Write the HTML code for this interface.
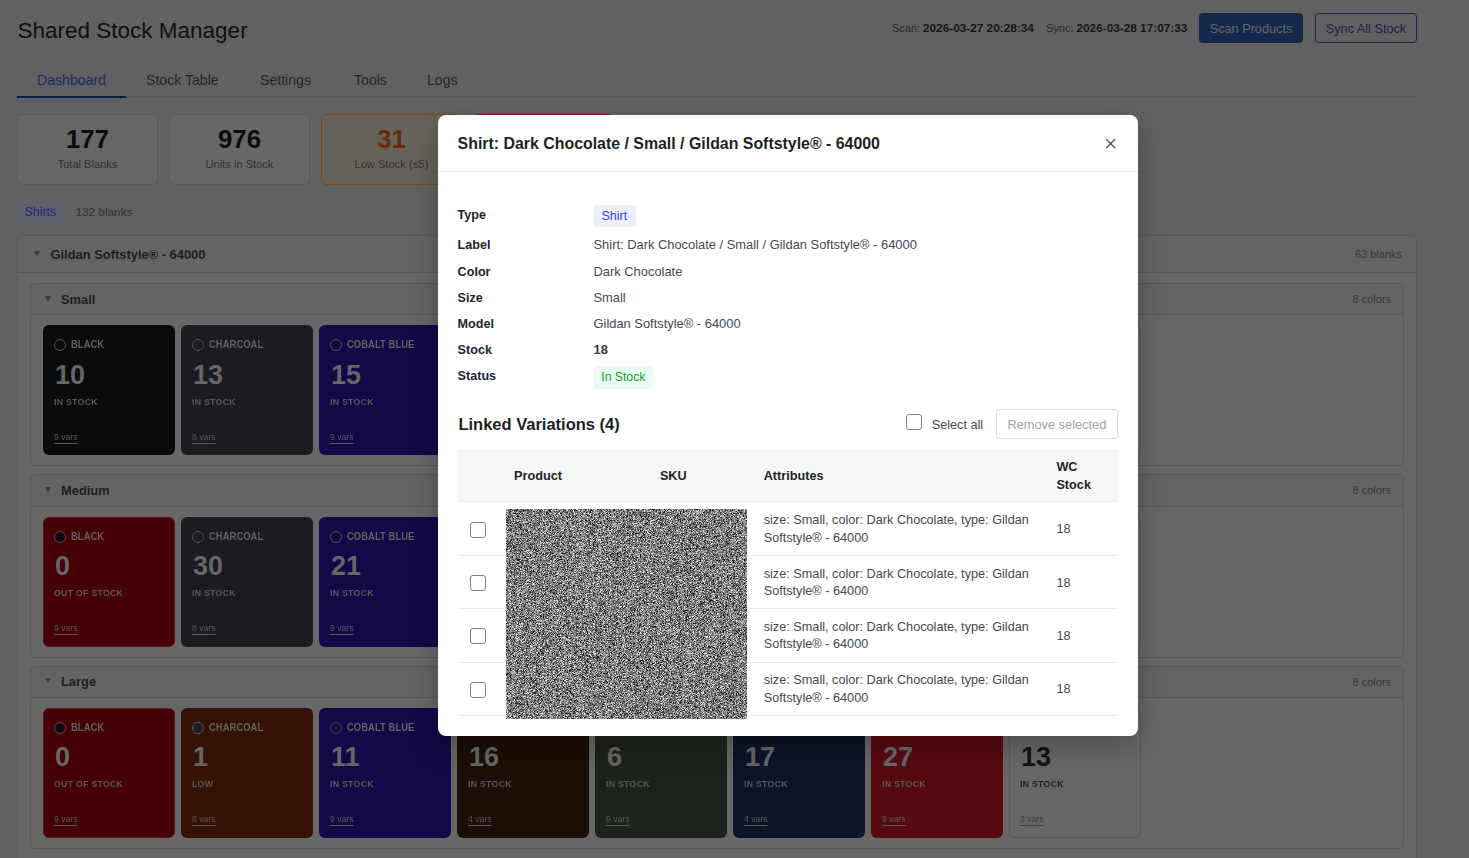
<!DOCTYPE html>
<html><head><meta charset="utf-8"><style>
html,body{margin:0;padding:0;width:1469px;height:858px;overflow:hidden;background:rgb(97,97,98);}
body{position:relative;font-family:"Liberation Sans", sans-serif;}
body>div,body>svg{position:absolute;}
.t{white-space:nowrap;}
</style></head><body>
<div class="t" style="left:17.5px;top:20.00px;font-size:22.5px;line-height:22.5px;color:rgb(14,15,18);font-weight:400;;">Shared Stock Manager</div>
<div class="t" style="left:892px;top:23.00px;font-size:11px;line-height:11px;color:rgb(40,40,44);font-weight:400;;">Scan:</div>
<div class="t" style="left:923px;top:23.00px;font-size:11.8px;line-height:11.8px;color:rgb(22,22,26);font-weight:700;;">2026-03-27 20:28:34</div>
<div class="t" style="left:1046px;top:23.00px;font-size:11px;line-height:11px;color:rgb(40,40,44);font-weight:400;;">Sync:</div>
<div class="t" style="left:1076.5px;top:23.00px;font-size:11.8px;line-height:11.8px;color:rgb(22,22,26);font-weight:700;;">2026-03-28 17:07:33</div>
<div style="left:1199px;top:13px;width:104px;height:30px;background:rgb(20,40,74);border-radius:4px"></div>
<div class="t" style="left:1199px;width:104px;text-align:center;top:23.00px;font-size:12.7px;line-height:12.7px;color:rgb(102,104,110);font-weight:400;;">Scan Products</div>
<div style="left:1315px;top:13px;width:102px;height:30px;border:1px solid rgb(20,40,74);border-radius:4px;box-sizing:border-box"></div>
<div class="t" style="left:1315px;width:102px;text-align:center;top:23.00px;font-size:12.7px;line-height:12.7px;color:rgb(20,36,66);font-weight:400;;">Sync All Stock</div>
<div style="left:17px;top:96px;width:1400px;height:2px;background:rgb(87,87,88)"></div>
<div class="t" style="left:37px;top:73.00px;font-size:14.1px;line-height:14.1px;color:rgb(22,44,88);font-weight:400;;">Dashboard</div>
<div class="t" style="left:146px;top:73.00px;font-size:14.1px;line-height:14.1px;color:rgb(36,36,40);font-weight:400;;">Stock Table</div>
<div class="t" style="left:260px;top:73.00px;font-size:14.1px;line-height:14.1px;color:rgb(36,36,40);font-weight:400;;">Settings</div>
<div class="t" style="left:354px;top:73.00px;font-size:14.1px;line-height:14.1px;color:rgb(36,36,40);font-weight:400;;">Tools</div>
<div class="t" style="left:427px;top:73.00px;font-size:14.1px;line-height:14.1px;color:rgb(36,36,40);font-weight:400;;">Logs</div>
<div style="left:17px;top:96px;width:109px;height:2px;background:rgb(10,30,72)"></div>
<div style="left:17px;top:114px;width:141px;height:71px;background:rgb(103,103,103);border:1px solid rgb(88,88,89);border-radius:6px;box-sizing:border-box"></div>
<div class="t" style="left:17px;width:141px;text-align:center;top:127.00px;font-size:25.8px;line-height:25.8px;color:rgb(12,12,16);font-weight:700;;">177</div>
<div class="t" style="left:17px;width:141px;text-align:center;top:159.00px;font-size:11.1px;line-height:11.1px;color:rgb(48,48,52);font-weight:400;;">Total Blanks</div>
<div style="left:169px;top:114px;width:141px;height:71px;background:rgb(103,103,103);border:1px solid rgb(88,88,89);border-radius:6px;box-sizing:border-box"></div>
<div class="t" style="left:169px;width:141px;text-align:center;top:127.00px;font-size:25.8px;line-height:25.8px;color:rgb(12,12,16);font-weight:700;;">976</div>
<div class="t" style="left:169px;width:141px;text-align:center;top:159.00px;font-size:11.1px;line-height:11.1px;color:rgb(48,48,52);font-weight:400;;">Units in Stock</div>
<div style="left:321px;top:114px;width:141px;height:71px;background:rgb(103,99,91);border:1px solid rgb(128,72,14);border-radius:6px;box-sizing:border-box"></div>
<div class="t" style="left:321px;width:141px;text-align:center;top:127.00px;font-size:25.8px;line-height:25.8px;color:rgb(104,42,10);font-weight:700;;">31</div>
<div class="t" style="left:321px;width:141px;text-align:center;top:159.00px;font-size:11.1px;line-height:11.1px;color:rgb(48,48,52);font-weight:400;;">Low Stock (≤5)</div>
<div style="left:473px;top:114px;width:141px;height:71px;background:rgb(104,94,94);border:1px solid rgb(120,20,24);border-radius:6px;box-sizing:border-box"></div>
<div style="left:17px;top:201px;width:48px;height:21.5px;background:rgb(94,96,110);border-radius:3px"></div>
<div class="t" style="left:24.5px;top:206.00px;font-size:12.4px;line-height:12.4px;color:rgb(40,36,120);font-weight:400;;">Shirts</div>
<div class="t" style="left:75.4px;top:207.00px;font-size:11.8px;line-height:11.8px;color:rgb(48,48,52);font-weight:400;;">132 blanks</div>
<div style="left:17px;top:235px;width:1400px;height:700px;background:rgb(103,103,103);border:1px solid rgb(88,88,89);border-radius:6px;box-sizing:border-box"></div>
<div style="left:18px;top:236px;width:1398px;height:36px;background:rgb(100,100,101);border-radius:5px 5px 0 0"></div>
<div style="left:18px;top:272px;width:1398px;height:1px;background:rgb(88,88,89)"></div>
<div style="left:34px;top:251.1px;width:0;height:0;border-left:3px solid transparent;border-right:3px solid transparent;border-top:6px solid rgb(58,61,70)"></div>
<div class="t" style="left:50.5px;top:249.00px;font-size:12.9px;line-height:12.9px;color:rgb(28,30,38);font-weight:700;;">Gildan Softstyle® - 64000</div>
<div class="t" style="right:67px;text-align:right;top:249.00px;font-size:11px;line-height:11px;color:rgb(52,52,58);font-weight:400;;">63 blanks</div>
<div style="left:30px;top:283px;width:1374px;height:183px;background:rgb(103,103,103);border:1px solid rgb(88,88,89);border-radius:5px;box-sizing:border-box"></div>
<div style="left:31px;top:284px;width:1372px;height:30px;background:rgb(100,100,101);border-radius:4px 4px 0 0"></div>
<div style="left:31px;top:314px;width:1372px;height:1px;background:rgb(88,88,89)"></div>
<div style="left:45px;top:295.5px;width:0;height:0;border-left:3px solid transparent;border-right:3px solid transparent;border-top:6px solid rgb(58,61,70)"></div>
<div class="t" style="left:61px;top:294.00px;font-size:12.9px;line-height:12.9px;color:rgb(28,30,38);font-weight:700;;">Small</div>
<div class="t" style="right:78px;text-align:right;top:294.00px;font-size:11px;line-height:11px;color:rgb(52,52,58);font-weight:400;;">8 colors</div>
<div style="left:43px;top:325px;width:132px;height:130px;background:rgb(11,11,11);border-radius:6px;box-sizing:border-box"></div>
<div style="left:54px;top:339px;width:12px;height:12px;border:1px solid rgb(80,80,80);border-radius:50%;box-sizing:border-box"></div>
<div class="t" style="left:71.4px;top:339.00px;font-size:10.9px;line-height:10.9px;color:rgb(98,98,98);font-weight:700;letter-spacing:0.1px;transform:scaleX(0.86);transform-origin:0 0;">BLACK</div>
<div class="t" style="left:55px;top:362.00px;font-size:27px;line-height:27px;color:rgb(102,102,102);font-weight:700;;">10</div>
<div class="t" style="left:54px;top:398.00px;font-size:9.2px;line-height:9.2px;color:rgb(90,90,90);font-weight:700;letter-spacing:0.3px;transform:scaleX(0.95);transform-origin:0 0;">IN STOCK</div>
<div class="t" style="left:54px;top:432.00px;font-size:9.6px;line-height:9.6px;color:rgb(90,90,90);font-weight:400;text-decoration:underline;text-underline-offset:2.6px;transform:scaleX(0.9);transform-origin:0 0;">9 vars</div>
<div style="left:181px;top:325px;width:132px;height:130px;background:rgb(26,28,34);border-radius:6px;box-sizing:border-box"></div>
<div style="left:192px;top:339px;width:12px;height:12px;border:1px solid rgb(80,80,80);border-radius:50%;box-sizing:border-box"></div>
<div class="t" style="left:209.4px;top:339.00px;font-size:10.9px;line-height:10.9px;color:rgb(98,98,98);font-weight:700;letter-spacing:0.1px;transform:scaleX(0.86);transform-origin:0 0;">CHARCOAL</div>
<div class="t" style="left:193px;top:362.00px;font-size:27px;line-height:27px;color:rgb(102,102,102);font-weight:700;;">13</div>
<div class="t" style="left:192px;top:398.00px;font-size:9.2px;line-height:9.2px;color:rgb(90,90,90);font-weight:700;letter-spacing:0.3px;transform:scaleX(0.95);transform-origin:0 0;">IN STOCK</div>
<div class="t" style="left:192px;top:432.00px;font-size:9.6px;line-height:9.6px;color:rgb(90,90,90);font-weight:400;text-decoration:underline;text-underline-offset:2.6px;transform:scaleX(0.9);transform-origin:0 0;">8 vars</div>
<div style="left:319px;top:325px;width:132px;height:130px;background:rgb(19,8,72);border-radius:6px;box-sizing:border-box"></div>
<div style="left:330px;top:339px;width:12px;height:12px;border:1px solid rgb(80,80,80);border-radius:50%;box-sizing:border-box"></div>
<div class="t" style="left:347.4px;top:339.00px;font-size:10.9px;line-height:10.9px;color:rgb(98,98,98);font-weight:700;letter-spacing:0.1px;transform:scaleX(0.86);transform-origin:0 0;">COBALT BLUE</div>
<div class="t" style="left:331px;top:362.00px;font-size:27px;line-height:27px;color:rgb(102,102,102);font-weight:700;;">15</div>
<div class="t" style="left:330px;top:398.00px;font-size:9.2px;line-height:9.2px;color:rgb(90,90,90);font-weight:700;letter-spacing:0.3px;transform:scaleX(0.95);transform-origin:0 0;">IN STOCK</div>
<div class="t" style="left:330px;top:432.00px;font-size:9.6px;line-height:9.6px;color:rgb(90,90,90);font-weight:400;text-decoration:underline;text-underline-offset:2.6px;transform:scaleX(0.9);transform-origin:0 0;">9 vars</div>
<div style="left:457px;top:325px;width:132px;height:130px;background:rgb(27,15,7);border-radius:6px;box-sizing:border-box"></div>
<div style="left:468px;top:339px;width:12px;height:12px;border:1px solid rgb(80,80,80);border-radius:50%;box-sizing:border-box"></div>
<div class="t" style="left:485.4px;top:339.00px;font-size:10.9px;line-height:10.9px;color:rgb(98,98,98);font-weight:700;letter-spacing:0.1px;transform:scaleX(0.86);transform-origin:0 0;">DARK CHOCOLATE</div>
<div class="t" style="left:469px;top:362.00px;font-size:27px;line-height:27px;color:rgb(102,102,102);font-weight:700;;">18</div>
<div class="t" style="left:468px;top:398.00px;font-size:9.2px;line-height:9.2px;color:rgb(90,90,90);font-weight:700;letter-spacing:0.3px;transform:scaleX(0.95);transform-origin:0 0;">IN STOCK</div>
<div class="t" style="left:468px;top:432.00px;font-size:9.6px;line-height:9.6px;color:rgb(90,90,90);font-weight:400;text-decoration:underline;text-underline-offset:2.6px;transform:scaleX(0.9);transform-origin:0 0;">4 vars</div>
<div style="left:595px;top:325px;width:132px;height:130px;background:rgb(30,34,28);border-radius:6px;box-sizing:border-box"></div>
<div style="left:606px;top:339px;width:12px;height:12px;border:1px solid rgb(80,80,80);border-radius:50%;box-sizing:border-box"></div>
<div class="t" style="left:623.4px;top:339.00px;font-size:10.9px;line-height:10.9px;color:rgb(98,98,98);font-weight:700;letter-spacing:0.1px;transform:scaleX(0.86);transform-origin:0 0;">FOREST</div>
<div class="t" style="left:607px;top:362.00px;font-size:27px;line-height:27px;color:rgb(102,102,102);font-weight:700;;">6</div>
<div class="t" style="left:606px;top:398.00px;font-size:9.2px;line-height:9.2px;color:rgb(90,90,90);font-weight:700;letter-spacing:0.3px;transform:scaleX(0.95);transform-origin:0 0;">IN STOCK</div>
<div class="t" style="left:606px;top:432.00px;font-size:9.6px;line-height:9.6px;color:rgb(90,90,90);font-weight:400;text-decoration:underline;text-underline-offset:2.6px;transform:scaleX(0.9);transform-origin:0 0;">9 vars</div>
<div style="left:733px;top:325px;width:132px;height:130px;background:rgb(13,20,40);border-radius:6px;box-sizing:border-box"></div>
<div style="left:744px;top:339px;width:12px;height:12px;border:1px solid rgb(80,80,80);border-radius:50%;box-sizing:border-box"></div>
<div class="t" style="left:761.4px;top:339.00px;font-size:10.9px;line-height:10.9px;color:rgb(98,98,98);font-weight:700;letter-spacing:0.1px;transform:scaleX(0.86);transform-origin:0 0;">NAVY</div>
<div class="t" style="left:745px;top:362.00px;font-size:27px;line-height:27px;color:rgb(102,102,102);font-weight:700;;">17</div>
<div class="t" style="left:744px;top:398.00px;font-size:9.2px;line-height:9.2px;color:rgb(90,90,90);font-weight:700;letter-spacing:0.3px;transform:scaleX(0.95);transform-origin:0 0;">IN STOCK</div>
<div class="t" style="left:744px;top:432.00px;font-size:9.6px;line-height:9.6px;color:rgb(90,90,90);font-weight:400;text-decoration:underline;text-underline-offset:2.6px;transform:scaleX(0.9);transform-origin:0 0;">4 vars</div>
<div style="left:871px;top:325px;width:132px;height:130px;background:rgb(86,10,16);border-radius:6px;box-sizing:border-box"></div>
<div style="left:882px;top:339px;width:12px;height:12px;border:1px solid rgb(80,80,80);border-radius:50%;box-sizing:border-box"></div>
<div class="t" style="left:899.4px;top:339.00px;font-size:10.9px;line-height:10.9px;color:rgb(98,98,98);font-weight:700;letter-spacing:0.1px;transform:scaleX(0.86);transform-origin:0 0;">RED</div>
<div class="t" style="left:883px;top:362.00px;font-size:27px;line-height:27px;color:rgb(102,102,102);font-weight:700;;">27</div>
<div class="t" style="left:882px;top:398.00px;font-size:9.2px;line-height:9.2px;color:rgb(90,90,90);font-weight:700;letter-spacing:0.3px;transform:scaleX(0.95);transform-origin:0 0;">IN STOCK</div>
<div class="t" style="left:882px;top:432.00px;font-size:9.6px;line-height:9.6px;color:rgb(90,90,90);font-weight:400;text-decoration:underline;text-underline-offset:2.6px;transform:scaleX(0.9);transform-origin:0 0;">9 vars</div>
<div style="left:1009px;top:325px;width:132px;height:130px;background:rgb(103,103,103);border:1px solid rgb(88,88,89);border-radius:6px;box-sizing:border-box"></div>
<div style="left:1020px;top:339px;width:12px;height:12px;border:1px solid rgb(80,80,80);border-radius:50%;box-sizing:border-box"></div>
<div class="t" style="left:1037.4px;top:339.00px;font-size:10.9px;line-height:10.9px;color:rgb(40,40,44);font-weight:700;letter-spacing:0.1px;transform:scaleX(0.86);transform-origin:0 0;">WHITE</div>
<div class="t" style="left:1021px;top:362.00px;font-size:27px;line-height:27px;color:rgb(20,20,24);font-weight:700;;">13</div>
<div class="t" style="left:1020px;top:398.00px;font-size:9.2px;line-height:9.2px;color:rgb(30,30,34);font-weight:700;letter-spacing:0.3px;transform:scaleX(0.95);transform-origin:0 0;">IN STOCK</div>
<div class="t" style="left:1020px;top:432.00px;font-size:9.6px;line-height:9.6px;color:rgb(60,60,64);font-weight:400;text-decoration:underline;text-underline-offset:2.6px;transform:scaleX(0.9);transform-origin:0 0;">3 vars</div>
<div style="left:30px;top:474px;width:1374px;height:184px;background:rgb(103,103,103);border:1px solid rgb(88,88,89);border-radius:5px;box-sizing:border-box"></div>
<div style="left:31px;top:475px;width:1372px;height:31px;background:rgb(100,100,101);border-radius:4px 4px 0 0"></div>
<div style="left:31px;top:506px;width:1372px;height:1px;background:rgb(88,88,89)"></div>
<div style="left:45px;top:486.5px;width:0;height:0;border-left:3px solid transparent;border-right:3px solid transparent;border-top:6px solid rgb(58,61,70)"></div>
<div class="t" style="left:61px;top:485.00px;font-size:12.9px;line-height:12.9px;color:rgb(28,30,38);font-weight:700;;">Medium</div>
<div class="t" style="right:78px;text-align:right;top:485.00px;font-size:11px;line-height:11px;color:rgb(52,52,58);font-weight:400;;">8 colors</div>
<div style="left:43px;top:517px;width:132px;height:130px;background:rgb(69,0,8);border:1px solid rgb(100,16,24);border-radius:6px;box-sizing:border-box"></div>
<div style="left:54px;top:531px;width:12px;height:12px;background:rgb(14,10,10);border:1px solid rgb(88,76,76);border-radius:50%;box-sizing:border-box"></div>
<div class="t" style="left:71.4px;top:531.00px;font-size:10.9px;line-height:10.9px;color:rgb(98,98,98);font-weight:700;letter-spacing:0.1px;transform:scaleX(0.86);transform-origin:0 0;">BLACK</div>
<div class="t" style="left:55px;top:553.00px;font-size:27px;line-height:27px;color:rgb(102,102,102);font-weight:700;;">0</div>
<div class="t" style="left:54px;top:589.00px;font-size:9.2px;line-height:9.2px;color:rgb(90,90,90);font-weight:700;letter-spacing:0.3px;transform:scaleX(0.95);transform-origin:0 0;">OUT OF STOCK</div>
<div class="t" style="left:54px;top:623.00px;font-size:9.6px;line-height:9.6px;color:rgb(90,90,90);font-weight:400;text-decoration:underline;text-underline-offset:2.6px;transform:scaleX(0.9);transform-origin:0 0;">9 vars</div>
<div style="left:181px;top:517px;width:132px;height:130px;background:rgb(26,28,34);border-radius:6px;box-sizing:border-box"></div>
<div style="left:192px;top:531px;width:12px;height:12px;border:1px solid rgb(80,80,80);border-radius:50%;box-sizing:border-box"></div>
<div class="t" style="left:209.4px;top:531.00px;font-size:10.9px;line-height:10.9px;color:rgb(98,98,98);font-weight:700;letter-spacing:0.1px;transform:scaleX(0.86);transform-origin:0 0;">CHARCOAL</div>
<div class="t" style="left:193px;top:553.00px;font-size:27px;line-height:27px;color:rgb(102,102,102);font-weight:700;;">30</div>
<div class="t" style="left:192px;top:589.00px;font-size:9.2px;line-height:9.2px;color:rgb(90,90,90);font-weight:700;letter-spacing:0.3px;transform:scaleX(0.95);transform-origin:0 0;">IN STOCK</div>
<div class="t" style="left:192px;top:623.00px;font-size:9.6px;line-height:9.6px;color:rgb(90,90,90);font-weight:400;text-decoration:underline;text-underline-offset:2.6px;transform:scaleX(0.9);transform-origin:0 0;">8 vars</div>
<div style="left:319px;top:517px;width:132px;height:130px;background:rgb(19,8,72);border-radius:6px;box-sizing:border-box"></div>
<div style="left:330px;top:531px;width:12px;height:12px;border:1px solid rgb(80,80,80);border-radius:50%;box-sizing:border-box"></div>
<div class="t" style="left:347.4px;top:531.00px;font-size:10.9px;line-height:10.9px;color:rgb(98,98,98);font-weight:700;letter-spacing:0.1px;transform:scaleX(0.86);transform-origin:0 0;">COBALT BLUE</div>
<div class="t" style="left:331px;top:553.00px;font-size:27px;line-height:27px;color:rgb(102,102,102);font-weight:700;;">21</div>
<div class="t" style="left:330px;top:589.00px;font-size:9.2px;line-height:9.2px;color:rgb(90,90,90);font-weight:700;letter-spacing:0.3px;transform:scaleX(0.95);transform-origin:0 0;">IN STOCK</div>
<div class="t" style="left:330px;top:623.00px;font-size:9.6px;line-height:9.6px;color:rgb(90,90,90);font-weight:400;text-decoration:underline;text-underline-offset:2.6px;transform:scaleX(0.9);transform-origin:0 0;">9 vars</div>
<div style="left:457px;top:517px;width:132px;height:130px;background:rgb(27,15,7);border-radius:6px;box-sizing:border-box"></div>
<div style="left:468px;top:531px;width:12px;height:12px;border:1px solid rgb(80,80,80);border-radius:50%;box-sizing:border-box"></div>
<div class="t" style="left:485.4px;top:531.00px;font-size:10.9px;line-height:10.9px;color:rgb(98,98,98);font-weight:700;letter-spacing:0.1px;transform:scaleX(0.86);transform-origin:0 0;">DARK CHOCOLATE</div>
<div class="t" style="left:469px;top:553.00px;font-size:27px;line-height:27px;color:rgb(102,102,102);font-weight:700;;">18</div>
<div class="t" style="left:468px;top:589.00px;font-size:9.2px;line-height:9.2px;color:rgb(90,90,90);font-weight:700;letter-spacing:0.3px;transform:scaleX(0.95);transform-origin:0 0;">IN STOCK</div>
<div class="t" style="left:468px;top:623.00px;font-size:9.6px;line-height:9.6px;color:rgb(90,90,90);font-weight:400;text-decoration:underline;text-underline-offset:2.6px;transform:scaleX(0.9);transform-origin:0 0;">4 vars</div>
<div style="left:595px;top:517px;width:132px;height:130px;background:rgb(30,34,28);border-radius:6px;box-sizing:border-box"></div>
<div style="left:606px;top:531px;width:12px;height:12px;border:1px solid rgb(80,80,80);border-radius:50%;box-sizing:border-box"></div>
<div class="t" style="left:623.4px;top:531.00px;font-size:10.9px;line-height:10.9px;color:rgb(98,98,98);font-weight:700;letter-spacing:0.1px;transform:scaleX(0.86);transform-origin:0 0;">FOREST</div>
<div class="t" style="left:607px;top:553.00px;font-size:27px;line-height:27px;color:rgb(102,102,102);font-weight:700;;">6</div>
<div class="t" style="left:606px;top:589.00px;font-size:9.2px;line-height:9.2px;color:rgb(90,90,90);font-weight:700;letter-spacing:0.3px;transform:scaleX(0.95);transform-origin:0 0;">IN STOCK</div>
<div class="t" style="left:606px;top:623.00px;font-size:9.6px;line-height:9.6px;color:rgb(90,90,90);font-weight:400;text-decoration:underline;text-underline-offset:2.6px;transform:scaleX(0.9);transform-origin:0 0;">9 vars</div>
<div style="left:733px;top:517px;width:132px;height:130px;background:rgb(13,20,40);border-radius:6px;box-sizing:border-box"></div>
<div style="left:744px;top:531px;width:12px;height:12px;border:1px solid rgb(80,80,80);border-radius:50%;box-sizing:border-box"></div>
<div class="t" style="left:761.4px;top:531.00px;font-size:10.9px;line-height:10.9px;color:rgb(98,98,98);font-weight:700;letter-spacing:0.1px;transform:scaleX(0.86);transform-origin:0 0;">NAVY</div>
<div class="t" style="left:745px;top:553.00px;font-size:27px;line-height:27px;color:rgb(102,102,102);font-weight:700;;">17</div>
<div class="t" style="left:744px;top:589.00px;font-size:9.2px;line-height:9.2px;color:rgb(90,90,90);font-weight:700;letter-spacing:0.3px;transform:scaleX(0.95);transform-origin:0 0;">IN STOCK</div>
<div class="t" style="left:744px;top:623.00px;font-size:9.6px;line-height:9.6px;color:rgb(90,90,90);font-weight:400;text-decoration:underline;text-underline-offset:2.6px;transform:scaleX(0.9);transform-origin:0 0;">4 vars</div>
<div style="left:871px;top:517px;width:132px;height:130px;background:rgb(86,10,16);border-radius:6px;box-sizing:border-box"></div>
<div style="left:882px;top:531px;width:12px;height:12px;border:1px solid rgb(80,80,80);border-radius:50%;box-sizing:border-box"></div>
<div class="t" style="left:899.4px;top:531.00px;font-size:10.9px;line-height:10.9px;color:rgb(98,98,98);font-weight:700;letter-spacing:0.1px;transform:scaleX(0.86);transform-origin:0 0;">RED</div>
<div class="t" style="left:883px;top:553.00px;font-size:27px;line-height:27px;color:rgb(102,102,102);font-weight:700;;">27</div>
<div class="t" style="left:882px;top:589.00px;font-size:9.2px;line-height:9.2px;color:rgb(90,90,90);font-weight:700;letter-spacing:0.3px;transform:scaleX(0.95);transform-origin:0 0;">IN STOCK</div>
<div class="t" style="left:882px;top:623.00px;font-size:9.6px;line-height:9.6px;color:rgb(90,90,90);font-weight:400;text-decoration:underline;text-underline-offset:2.6px;transform:scaleX(0.9);transform-origin:0 0;">9 vars</div>
<div style="left:1009px;top:517px;width:132px;height:130px;background:rgb(103,103,103);border:1px solid rgb(88,88,89);border-radius:6px;box-sizing:border-box"></div>
<div style="left:1020px;top:531px;width:12px;height:12px;border:1px solid rgb(80,80,80);border-radius:50%;box-sizing:border-box"></div>
<div class="t" style="left:1037.4px;top:531.00px;font-size:10.9px;line-height:10.9px;color:rgb(40,40,44);font-weight:700;letter-spacing:0.1px;transform:scaleX(0.86);transform-origin:0 0;">WHITE</div>
<div class="t" style="left:1021px;top:553.00px;font-size:27px;line-height:27px;color:rgb(20,20,24);font-weight:700;;">13</div>
<div class="t" style="left:1020px;top:589.00px;font-size:9.2px;line-height:9.2px;color:rgb(30,30,34);font-weight:700;letter-spacing:0.3px;transform:scaleX(0.95);transform-origin:0 0;">IN STOCK</div>
<div class="t" style="left:1020px;top:623.00px;font-size:9.6px;line-height:9.6px;color:rgb(60,60,64);font-weight:400;text-decoration:underline;text-underline-offset:2.6px;transform:scaleX(0.9);transform-origin:0 0;">3 vars</div>
<div style="left:30px;top:666px;width:1374px;height:183px;background:rgb(103,103,103);border:1px solid rgb(88,88,89);border-radius:5px;box-sizing:border-box"></div>
<div style="left:31px;top:667px;width:1372px;height:30px;background:rgb(100,100,101);border-radius:4px 4px 0 0"></div>
<div style="left:31px;top:697px;width:1372px;height:1px;background:rgb(88,88,89)"></div>
<div style="left:45px;top:678px;width:0;height:0;border-left:3px solid transparent;border-right:3px solid transparent;border-top:6px solid rgb(58,61,70)"></div>
<div class="t" style="left:61px;top:676.00px;font-size:12.9px;line-height:12.9px;color:rgb(28,30,38);font-weight:700;;">Large</div>
<div class="t" style="right:78px;text-align:right;top:677.00px;font-size:11px;line-height:11px;color:rgb(52,52,58);font-weight:400;;">8 colors</div>
<div style="left:43px;top:708px;width:132px;height:130px;background:rgb(69,0,8);border:1px solid rgb(100,16,24);border-radius:6px;box-sizing:border-box"></div>
<div style="left:54px;top:722px;width:12px;height:12px;background:rgb(14,10,10);border:1px solid rgb(88,76,76);border-radius:50%;box-sizing:border-box"></div>
<div class="t" style="left:71.4px;top:722.00px;font-size:10.9px;line-height:10.9px;color:rgb(98,98,98);font-weight:700;letter-spacing:0.1px;transform:scaleX(0.86);transform-origin:0 0;">BLACK</div>
<div class="t" style="left:55px;top:744.00px;font-size:27px;line-height:27px;color:rgb(102,102,102);font-weight:700;;">0</div>
<div class="t" style="left:54px;top:780.00px;font-size:9.2px;line-height:9.2px;color:rgb(90,90,90);font-weight:700;letter-spacing:0.3px;transform:scaleX(0.95);transform-origin:0 0;">OUT OF STOCK</div>
<div class="t" style="left:54px;top:814.00px;font-size:9.6px;line-height:9.6px;color:rgb(90,90,90);font-weight:400;text-decoration:underline;text-underline-offset:2.6px;transform:scaleX(0.9);transform-origin:0 0;">9 vars</div>
<div style="left:181px;top:708px;width:132px;height:130px;background:rgb(54,18,4);border-radius:6px;box-sizing:border-box"></div>
<div style="left:192px;top:722px;width:12px;height:12px;background:rgb(26,28,34);border:1px solid rgb(92,92,92);border-radius:50%;box-sizing:border-box"></div>
<div class="t" style="left:209.4px;top:722.00px;font-size:10.9px;line-height:10.9px;color:rgb(98,98,98);font-weight:700;letter-spacing:0.1px;transform:scaleX(0.86);transform-origin:0 0;">CHARCOAL</div>
<div class="t" style="left:193px;top:744.00px;font-size:27px;line-height:27px;color:rgb(102,102,102);font-weight:700;;">1</div>
<div class="t" style="left:192px;top:780.00px;font-size:9.2px;line-height:9.2px;color:rgb(90,90,90);font-weight:700;letter-spacing:0.3px;transform:scaleX(0.95);transform-origin:0 0;">LOW</div>
<div class="t" style="left:192px;top:814.00px;font-size:9.6px;line-height:9.6px;color:rgb(90,90,90);font-weight:400;text-decoration:underline;text-underline-offset:2.6px;transform:scaleX(0.9);transform-origin:0 0;">8 vars</div>
<div style="left:319px;top:708px;width:132px;height:130px;background:rgb(19,8,72);border-radius:6px;box-sizing:border-box"></div>
<div style="left:330px;top:722px;width:12px;height:12px;border:1px solid rgb(80,80,80);border-radius:50%;box-sizing:border-box"></div>
<div class="t" style="left:347.4px;top:722.00px;font-size:10.9px;line-height:10.9px;color:rgb(98,98,98);font-weight:700;letter-spacing:0.1px;transform:scaleX(0.86);transform-origin:0 0;">COBALT BLUE</div>
<div class="t" style="left:331px;top:744.00px;font-size:27px;line-height:27px;color:rgb(102,102,102);font-weight:700;;">11</div>
<div class="t" style="left:330px;top:780.00px;font-size:9.2px;line-height:9.2px;color:rgb(90,90,90);font-weight:700;letter-spacing:0.3px;transform:scaleX(0.95);transform-origin:0 0;">IN STOCK</div>
<div class="t" style="left:330px;top:814.00px;font-size:9.6px;line-height:9.6px;color:rgb(90,90,90);font-weight:400;text-decoration:underline;text-underline-offset:2.6px;transform:scaleX(0.9);transform-origin:0 0;">9 vars</div>
<div style="left:457px;top:708px;width:132px;height:130px;background:rgb(27,15,7);border-radius:6px;box-sizing:border-box"></div>
<div style="left:468px;top:722px;width:12px;height:12px;border:1px solid rgb(80,80,80);border-radius:50%;box-sizing:border-box"></div>
<div class="t" style="left:485.4px;top:722.00px;font-size:10.9px;line-height:10.9px;color:rgb(98,98,98);font-weight:700;letter-spacing:0.1px;transform:scaleX(0.86);transform-origin:0 0;">DARK CHOCOLATE</div>
<div class="t" style="left:469px;top:744.00px;font-size:27px;line-height:27px;color:rgb(102,102,102);font-weight:700;;">16</div>
<div class="t" style="left:468px;top:780.00px;font-size:9.2px;line-height:9.2px;color:rgb(90,90,90);font-weight:700;letter-spacing:0.3px;transform:scaleX(0.95);transform-origin:0 0;">IN STOCK</div>
<div class="t" style="left:468px;top:814.00px;font-size:9.6px;line-height:9.6px;color:rgb(90,90,90);font-weight:400;text-decoration:underline;text-underline-offset:2.6px;transform:scaleX(0.9);transform-origin:0 0;">4 vars</div>
<div style="left:595px;top:708px;width:132px;height:130px;background:rgb(30,34,28);border-radius:6px;box-sizing:border-box"></div>
<div style="left:606px;top:722px;width:12px;height:12px;border:1px solid rgb(80,80,80);border-radius:50%;box-sizing:border-box"></div>
<div class="t" style="left:623.4px;top:722.00px;font-size:10.9px;line-height:10.9px;color:rgb(98,98,98);font-weight:700;letter-spacing:0.1px;transform:scaleX(0.86);transform-origin:0 0;">FOREST</div>
<div class="t" style="left:607px;top:744.00px;font-size:27px;line-height:27px;color:rgb(102,102,102);font-weight:700;;">6</div>
<div class="t" style="left:606px;top:780.00px;font-size:9.2px;line-height:9.2px;color:rgb(90,90,90);font-weight:700;letter-spacing:0.3px;transform:scaleX(0.95);transform-origin:0 0;">IN STOCK</div>
<div class="t" style="left:606px;top:814.00px;font-size:9.6px;line-height:9.6px;color:rgb(90,90,90);font-weight:400;text-decoration:underline;text-underline-offset:2.6px;transform:scaleX(0.9);transform-origin:0 0;">9 vars</div>
<div style="left:733px;top:708px;width:132px;height:130px;background:rgb(13,20,40);border-radius:6px;box-sizing:border-box"></div>
<div style="left:744px;top:722px;width:12px;height:12px;border:1px solid rgb(80,80,80);border-radius:50%;box-sizing:border-box"></div>
<div class="t" style="left:761.4px;top:722.00px;font-size:10.9px;line-height:10.9px;color:rgb(98,98,98);font-weight:700;letter-spacing:0.1px;transform:scaleX(0.86);transform-origin:0 0;">NAVY</div>
<div class="t" style="left:745px;top:744.00px;font-size:27px;line-height:27px;color:rgb(102,102,102);font-weight:700;;">17</div>
<div class="t" style="left:744px;top:780.00px;font-size:9.2px;line-height:9.2px;color:rgb(90,90,90);font-weight:700;letter-spacing:0.3px;transform:scaleX(0.95);transform-origin:0 0;">IN STOCK</div>
<div class="t" style="left:744px;top:814.00px;font-size:9.6px;line-height:9.6px;color:rgb(90,90,90);font-weight:400;text-decoration:underline;text-underline-offset:2.6px;transform:scaleX(0.9);transform-origin:0 0;">4 vars</div>
<div style="left:871px;top:708px;width:132px;height:130px;background:rgb(86,10,16);border-radius:6px;box-sizing:border-box"></div>
<div style="left:882px;top:722px;width:12px;height:12px;border:1px solid rgb(80,80,80);border-radius:50%;box-sizing:border-box"></div>
<div class="t" style="left:899.4px;top:722.00px;font-size:10.9px;line-height:10.9px;color:rgb(98,98,98);font-weight:700;letter-spacing:0.1px;transform:scaleX(0.86);transform-origin:0 0;">RED</div>
<div class="t" style="left:883px;top:744.00px;font-size:27px;line-height:27px;color:rgb(102,102,102);font-weight:700;;">27</div>
<div class="t" style="left:882px;top:780.00px;font-size:9.2px;line-height:9.2px;color:rgb(90,90,90);font-weight:700;letter-spacing:0.3px;transform:scaleX(0.95);transform-origin:0 0;">IN STOCK</div>
<div class="t" style="left:882px;top:814.00px;font-size:9.6px;line-height:9.6px;color:rgb(90,90,90);font-weight:400;text-decoration:underline;text-underline-offset:2.6px;transform:scaleX(0.9);transform-origin:0 0;">9 vars</div>
<div style="left:1009px;top:708px;width:132px;height:130px;background:rgb(103,103,103);border:1px solid rgb(88,88,89);border-radius:6px;box-sizing:border-box"></div>
<div style="left:1020px;top:722px;width:12px;height:12px;border:1px solid rgb(80,80,80);border-radius:50%;box-sizing:border-box"></div>
<div class="t" style="left:1037.4px;top:722.00px;font-size:10.9px;line-height:10.9px;color:rgb(40,40,44);font-weight:700;letter-spacing:0.1px;transform:scaleX(0.86);transform-origin:0 0;">WHITE</div>
<div class="t" style="left:1021px;top:744.00px;font-size:27px;line-height:27px;color:rgb(20,20,24);font-weight:700;;">13</div>
<div class="t" style="left:1020px;top:780.00px;font-size:9.2px;line-height:9.2px;color:rgb(30,30,34);font-weight:700;letter-spacing:0.3px;transform:scaleX(0.95);transform-origin:0 0;">IN STOCK</div>
<div class="t" style="left:1020px;top:814.00px;font-size:9.6px;line-height:9.6px;color:rgb(60,60,64);font-weight:400;text-decoration:underline;text-underline-offset:2.6px;transform:scaleX(0.9);transform-origin:0 0;">3 vars</div>
<div style="left:438px;top:115px;width:700px;height:621px;background:#fff;border-radius:8px;box-shadow:0 10px 30px rgba(0,0,0,0.25)"></div>
<div class="t" style="left:457.6px;top:136.00px;font-size:15.9px;line-height:15.9px;color:rgb(29,31,36);font-weight:700;;">Shirt: Dark Chocolate / Small / Gildan Softstyle® - 64000</div>
<svg style="left:1100px;top:133px" width="22" height="22" viewBox="1100 133 22 22"><path d="M1106.5 139.5L1114.7 147.7M1114.7 139.5L1106.5 147.7" stroke="rgb(90,95,106)" stroke-width="1.6" stroke-linecap="round"/></svg>
<div style="left:438px;top:171px;width:700px;height:1px;background:rgb(226,228,232)"></div>
<div class="t" style="left:457.6px;top:209.00px;font-size:12.6px;line-height:12.6px;color:rgb(34,36,42);font-weight:700;;">Type</div>
<div class="t" style="left:457.6px;top:239.00px;font-size:12.6px;line-height:12.6px;color:rgb(34,36,42);font-weight:700;;">Label</div>
<div class="t" style="left:457.6px;top:266.00px;font-size:12.6px;line-height:12.6px;color:rgb(34,36,42);font-weight:700;;">Color</div>
<div class="t" style="left:457.6px;top:292.00px;font-size:12.6px;line-height:12.6px;color:rgb(34,36,42);font-weight:700;;">Size</div>
<div class="t" style="left:457.6px;top:318.00px;font-size:12.6px;line-height:12.6px;color:rgb(34,36,42);font-weight:700;;">Model</div>
<div class="t" style="left:457.6px;top:344.00px;font-size:12.6px;line-height:12.6px;color:rgb(34,36,42);font-weight:700;;">Stock</div>
<div class="t" style="left:457.6px;top:370.00px;font-size:12.6px;line-height:12.6px;color:rgb(34,36,42);font-weight:700;;">Status</div>
<div style="left:594px;top:205px;width:42px;height:21.6px;background:rgb(236,239,253);border-radius:3px"></div>
<div class="t" style="left:601.5px;top:210.00px;font-size:12.5px;line-height:12.5px;color:rgb(60,60,215);font-weight:400;;">Shirt</div>
<div class="t" style="left:593.5px;top:239.00px;font-size:12.9px;line-height:12.9px;color:rgb(70,72,78);font-weight:400;;">Shirt: Dark Chocolate / Small / Gildan Softstyle® - 64000</div>
<div class="t" style="left:593.5px;top:266.00px;font-size:12.9px;line-height:12.9px;color:rgb(70,72,78);font-weight:400;;">Dark Chocolate</div>
<div class="t" style="left:593.5px;top:292.00px;font-size:12.9px;line-height:12.9px;color:rgb(70,72,78);font-weight:400;;">Small</div>
<div class="t" style="left:593.5px;top:318.00px;font-size:12.9px;line-height:12.9px;color:rgb(70,72,78);font-weight:400;;">Gildan Softstyle® - 64000</div>
<div class="t" style="left:593.5px;top:344.00px;font-size:12.9px;line-height:12.9px;color:rgb(52,54,60);font-weight:700;;">18</div>
<div style="left:594.2px;top:366px;width:58.5px;height:22.6px;background:rgb(235,250,240);border-radius:3px"></div>
<div class="t" style="left:601.3px;top:371.00px;font-size:12.2px;line-height:12.2px;color:rgb(18,160,50);font-weight:400;;">In Stock</div>
<div class="t" style="left:458.4px;top:416.00px;font-size:16.5px;line-height:16.5px;color:rgb(29,31,36);font-weight:700;;">Linked Variations (4)</div>
<div style="left:906px;top:414px;width:16px;height:16px;border:1px solid rgb(124,127,135);border-radius:3px;box-sizing:border-box"></div>
<div class="t" style="left:931.7px;top:419.00px;font-size:12.7px;line-height:12.7px;color:rgb(70,72,78);font-weight:400;;">Select all</div>
<div style="left:996px;top:409px;width:122px;height:29.5px;border:1px solid rgb(220,222,226);border-radius:3px;box-sizing:border-box"></div>
<div class="t" style="left:996px;width:121.7px;text-align:center;top:419.00px;font-size:12.8px;line-height:12.8px;color:rgb(160,162,168);font-weight:400;;">Remove selected</div>
<div style="left:458px;top:449px;width:660px;height:52.6px;background:rgb(245,246,246)"></div>
<div style="left:458px;top:501px;width:660px;height:1px;background:rgb(232,234,236)"></div>
<div class="t" style="left:514px;top:470.00px;font-size:12.7px;line-height:12.7px;color:rgb(34,36,42);font-weight:700;;">Product</div>
<div class="t" style="left:659.9px;top:470.00px;font-size:12.7px;line-height:12.7px;color:rgb(34,36,42);font-weight:700;;">SKU</div>
<div class="t" style="left:763.7px;top:470.00px;font-size:12.7px;line-height:12.7px;color:rgb(34,36,42);font-weight:700;;">Attributes</div>
<div class="t" style="left:1056.4px;top:461.00px;font-size:12.7px;line-height:12.7px;color:rgb(34,36,42);font-weight:700;;">WC</div>
<div class="t" style="left:1056.4px;top:479.00px;font-size:12.7px;line-height:12.7px;color:rgb(34,36,42);font-weight:700;;">Stock</div>
<div style="left:458px;top:555.4px;width:660px;height:1px;background:rgb(232,234,236)"></div>
<div style="left:470px;top:522px;width:16px;height:16px;border:1px solid rgb(124,127,135);border-radius:3px;box-sizing:border-box"></div>
<div class="t" style="left:763.7px;top:514.00px;font-size:12.7px;line-height:12.7px;color:rgb(70,72,78);font-weight:400;;">size: Small, color: Dark Chocolate, type: Gildan</div>
<div class="t" style="left:763.7px;top:532.00px;font-size:12.7px;line-height:12.7px;color:rgb(70,72,78);font-weight:400;;">Softstyle® - 64000</div>
<div class="t" style="left:1056.4px;top:523.00px;font-size:12.7px;line-height:12.7px;color:rgb(70,72,78);font-weight:400;;">18</div>
<div style="left:458px;top:608.3px;width:660px;height:1px;background:rgb(232,234,236)"></div>
<div style="left:470px;top:575px;width:16px;height:16px;border:1px solid rgb(124,127,135);border-radius:3px;box-sizing:border-box"></div>
<div class="t" style="left:763.7px;top:568.00px;font-size:12.7px;line-height:12.7px;color:rgb(70,72,78);font-weight:400;;">size: Small, color: Dark Chocolate, type: Gildan</div>
<div class="t" style="left:763.7px;top:585.00px;font-size:12.7px;line-height:12.7px;color:rgb(70,72,78);font-weight:400;;">Softstyle® - 64000</div>
<div class="t" style="left:1056.4px;top:577.00px;font-size:12.7px;line-height:12.7px;color:rgb(70,72,78);font-weight:400;;">18</div>
<div style="left:458px;top:661.5px;width:660px;height:1px;background:rgb(232,234,236)"></div>
<div style="left:470px;top:628px;width:16px;height:16px;border:1px solid rgb(124,127,135);border-radius:3px;box-sizing:border-box"></div>
<div class="t" style="left:763.7px;top:621.00px;font-size:12.7px;line-height:12.7px;color:rgb(70,72,78);font-weight:400;;">size: Small, color: Dark Chocolate, type: Gildan</div>
<div class="t" style="left:763.7px;top:638.00px;font-size:12.7px;line-height:12.7px;color:rgb(70,72,78);font-weight:400;;">Softstyle® - 64000</div>
<div class="t" style="left:1056.4px;top:630.00px;font-size:12.7px;line-height:12.7px;color:rgb(70,72,78);font-weight:400;;">18</div>
<div style="left:458px;top:715.4px;width:660px;height:1px;background:rgb(232,234,236)"></div>
<div style="left:470px;top:682.4px;width:16px;height:16px;border:1px solid rgb(124,127,135);border-radius:3px;box-sizing:border-box"></div>
<div class="t" style="left:763.7px;top:674.00px;font-size:12.7px;line-height:12.7px;color:rgb(70,72,78);font-weight:400;;">size: Small, color: Dark Chocolate, type: Gildan</div>
<div class="t" style="left:763.7px;top:692.00px;font-size:12.7px;line-height:12.7px;color:rgb(70,72,78);font-weight:400;;">Softstyle® - 64000</div>
<div class="t" style="left:1056.4px;top:683.00px;font-size:12.7px;line-height:12.7px;color:rgb(70,72,78);font-weight:400;;">18</div>
<svg style="left:506px;top:509px" width="241" height="210"><filter id="nz" x="0" y="0" width="100%" height="100%" color-interpolation-filters="sRGB"><feTurbulence type="fractalNoise" baseFrequency="2.3" numOctaves="1" seed="3"/><feColorMatrix type="matrix" values="2.0 0 0 0 -0.51  2.0 0 0 0 -0.51  2.0 0 0 0 -0.51  0 0 0 0 1"/></filter><rect width="241" height="210" filter="url(#nz)"/></svg>
</body></html>
